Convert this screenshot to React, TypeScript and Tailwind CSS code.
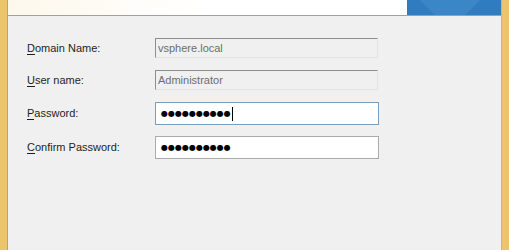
import React from 'react';

const font = { fontFamily: '"Liberation Sans", Arial, sans-serif' };

const Label = ({ k, rest }: { k: string; rest: string }) => (
  <div className="w-[128px] text-[11px] text-[#1e1e1e]">
    <u className="no-underline border-b border-[#1e1e1e] leading-[12px]">{k}</u>
    {rest}
  </div>
);

const Dots = () => (
  <span className="text-[8px] text-black leading-none" style={{ fontFamily: '"DejaVu Sans", sans-serif' }}>
    ●●●●●●●●●●
  </span>
);

export default function App() {
  return (
    <div className="w-[509px] h-[250px] flex bg-[#f0f0f0] overflow-hidden" style={font}>
      <div className="w-[8px] h-full bg-[#ebc46c] border-r border-[#c9a14f] shrink-0" />
      <div className="flex-1 flex flex-col">
        {/* Header strip */}
        <div className="h-[16px] flex bg-white border-b border-[#a0a0a0] shrink-0">
          <div className="flex-1 bg-gradient-to-r from-[#fdf8ec] via-white to-white" />
          <div className="w-[94px] h-[15px] bg-[#2f7cc0] relative overflow-hidden">
            <div className="absolute left-[18px] top-[-30px] w-[50px] h-[50px] bg-[#3a86c6] rotate-45" />
          </div>
        </div>

        {/* Form */}
        <div className="flex flex-col pl-[19px] pt-[22px]">
          <div className="flex items-center h-[20px]">
            <Label k="D" rest="omain Name:" />
            <div className="w-[223px] h-[20px] bg-[#f0f0f0] border border-t-[#8e8e8e] border-l-[#8e8e8e] border-r-[#e3e3e3] border-b-[#e3e3e3] flex items-center pl-[2px] text-[11px] text-[#6d6d6d]">
              vsphere.local
            </div>
          </div>
          <div className="flex items-center h-[20px] mt-[12px]">
            <Label k="U" rest="ser name:" />
            <div className="w-[223px] h-[20px] bg-[#f0f0f0] border border-t-[#8e8e8e] border-l-[#8e8e8e] border-r-[#e3e3e3] border-b-[#e3e3e3] flex items-center pl-[2px] text-[11px] text-[#6d6d6d]">
              Administrator
            </div>
          </div>
          <div className="flex items-center h-[23px] mt-[12px]">
            <Label k="P" rest="assword:" />
            <div className="w-[224px] h-[23px] bg-white border border-[#7a9fbd] flex items-center pl-[5px]">
              <Dots />
              <span className="w-[1px] h-[14px] bg-black ml-[1px]" />
            </div>
          </div>
          <div className="flex items-center h-[23px] mt-[11px]">
            <Label k="C" rest="onfirm Password:" />
            <div className="w-[224px] h-[23px] bg-white border border-[#ababab] flex items-center pl-[5px]">
              <Dots />
            </div>
          </div>
        </div>
      </div>
      <div className="w-[8px] h-full bg-[#ebc46c] border-l border-[#d6b465] shrink-0" />
    </div>
  );
}
